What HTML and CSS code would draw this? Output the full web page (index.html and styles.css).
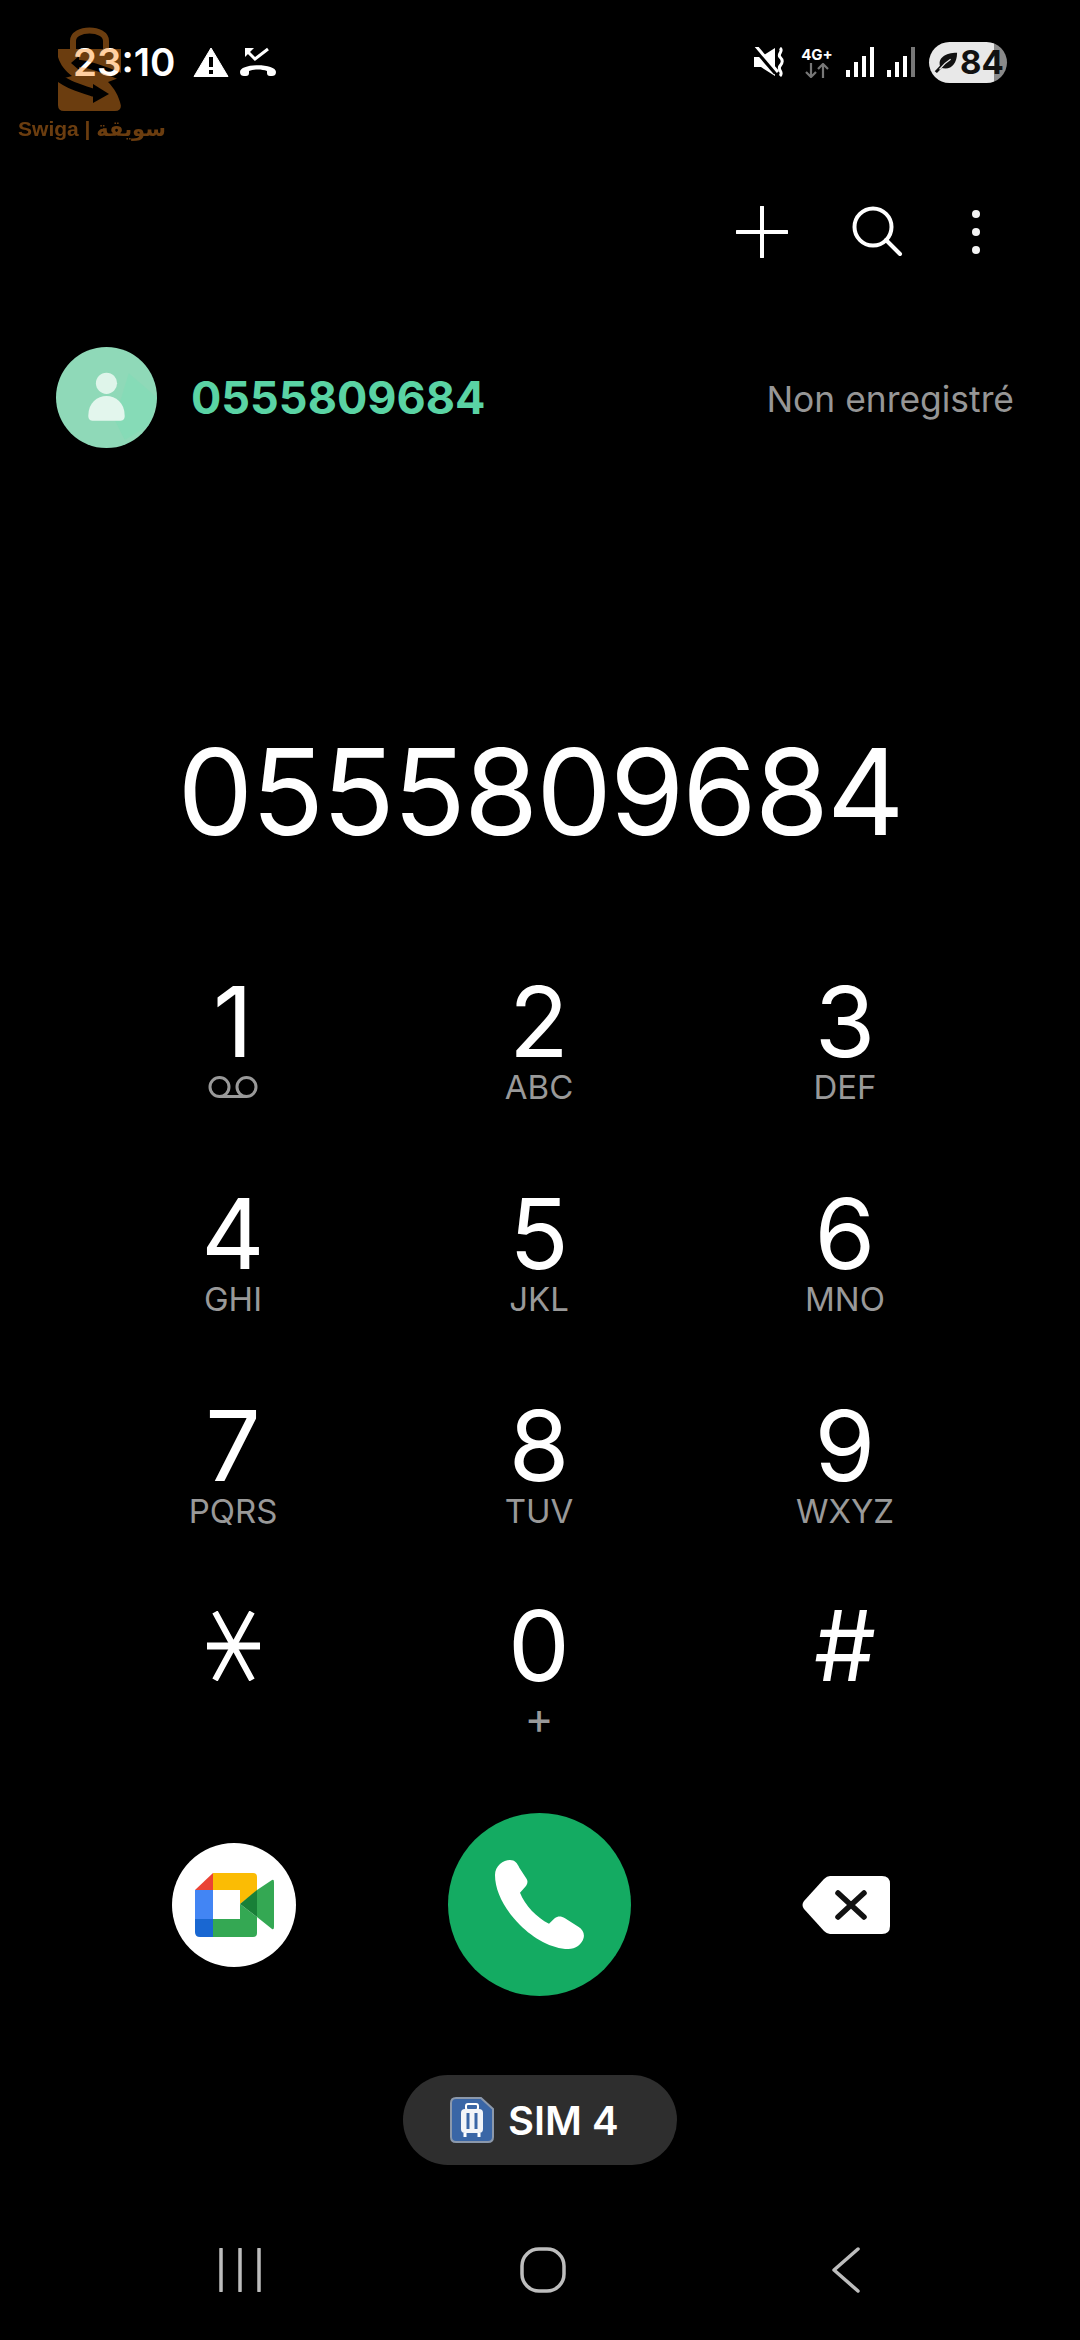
FILE: index.html
```html
<!DOCTYPE html>
<html lang="fr">
<head>
<meta charset="utf-8">
<title>Téléphone</title>
<link rel="stylesheet" href="styles.css">
</head>
<body>
<main class="phone">
  <header class="status">
    <div class="status-left">
      <span class="time">23:10</span>
      <svg class="st-warn" viewBox="0 0 36 30"><path d="M18 1 35 29.500H1Z" fill="#fff" stroke="#fff" stroke-linejoin="round"/><rect x="16" y="10" width="4" height="10" fill="#000"/><rect x="16" y="23" width="4" height="4" fill="#000"/></svg>
      <svg class="st-missed" viewBox="0 0 36 30"><path d="M6 3 15 12 28 2" fill="none" stroke="#fff" stroke-width="3"/><path d="M5 1h9L5 10Z" fill="#fff"/><path d="M0 25c0-9 36-9 36 0 0 3-2 4-4 4h-2c-2 0-3-1-3-3v-2c-5-2-13-2-18 0v2c0 2-1 3-3 3H4c-2 0-4-1-4-4Z" fill="#fff"/></svg>
    </div>
    <div class="status-right">
      <svg class="st-mute" viewBox="0 0 30 30"><path d="M0 10h7L21 1v28L7 20H0Z" fill="#fff"/><path d="M-1 -1 22 26" stroke="#000" stroke-width="5"/><path d="M1 -2 24 25" stroke="#fff" stroke-width="3"/><path d="M26 1c4 3-3 6 0 9s3 5 0 9 4 6 0 10" fill="none" stroke="#fff" stroke-width="3"/></svg>
      <div class="net">
        <span class="net-label">4G+</span>
        <svg class="net-arrows" viewBox="0 0 24 15"><path d="M6 0v14M1 9l5 5 5-5" fill="none" stroke="#777" stroke-width="2.200"/><path d="M18 15V1M13 6l5-5 5 5" fill="none" stroke="#777" stroke-width="2.200"/></svg>
      </div>
      <svg class="st-signal" viewBox="0 0 28 30"><rect x="0" y="23" width="4" height="7" fill="#fff"/><rect x="8" y="15" width="4" height="15" fill="#fff"/><rect x="16" y="9" width="4" height="21" fill="#fff"/><rect x="24" y="0" width="4" height="30" fill="#fff"/></svg>
      <svg class="st-signal" viewBox="0 0 28 30"><rect x="0" y="23" width="4" height="7" fill="#fff"/><rect x="8" y="15" width="4" height="15" fill="#fff"/><rect x="16" y="9" width="4" height="21" fill="#fff"/><rect x="24" y="0" width="4" height="30" fill="#777"/></svg>
      <div class="battery">
        <svg class="leaf" viewBox="0 0 26 26"><path d="M7 19C3 9 12 3 25 3 25 16 17 23 7 19Z" fill="#111"/><path d="M2 24C6 19 10 16 15 13" fill="none" stroke="#111" stroke-width="3"/><path d="M6 21C10 16 13 13 18 10" fill="none" stroke="#e8e8e8" stroke-width="1.500"/></svg>
        <span class="battery-level">84</span>
      </div>
    </div>
  </header>

  <nav class="toolbar">
    <svg class="tool tool-plus" viewBox="0 0 52 52"><path d="M26 1V51M1 26H51" stroke="#fff" stroke-width="4" stroke-linecap="round"/></svg>
    <svg class="tool tool-search" viewBox="0 0 52 52"><circle cx="21" cy="21" r="18.500" fill="none" stroke="#fff" stroke-width="4"/><path d="M34 34 48 48" stroke="#fff" stroke-width="4" stroke-linecap="round"/></svg>
    <svg class="tool tool-more" viewBox="0 0 10 46"><circle cx="5" cy="5" r="4" fill="#f4f4f4"/><circle cx="5" cy="23" r="4" fill="#f4f4f4"/><circle cx="5" cy="41" r="4" fill="#f4f4f4"/></svg>
  </nav>

  <section class="contact">
    <div class="contact-main">
      <div class="avatar">
        <svg viewBox="0 0 100 100"><path d="M72 26 100 50 92 78 68 92 58 72Z" fill="#7fdcb6" opacity=".55"/><circle cx="50" cy="36" r="10.500" fill="#dff5ea"/><path d="M32 68c0-26 36-26 36 0 0 4-2 5-5 5H37c-3 0-5-1-5-5Z" fill="#e3f6ed"/></svg>
      </div>
      <span class="contact-number">0555809684</span>
    </div>
    <span class="contact-state">Non enregistré</span>
  </section>

  <div class="dialed">0555809684</div>

  <section class="keypad">
    <div class="key">
      <span class="digit">1</span>
      <svg class="voicemail" viewBox="0 0 50 22"><circle cx="11.500" cy="11" r="9.500" fill="none" stroke="#999" stroke-width="3"/><circle cx="38.500" cy="11" r="9.500" fill="none" stroke="#999" stroke-width="3"/><path d="M11 20.500H39" stroke="#999" stroke-width="3"/></svg>
    </div>
    <div class="key"><span class="digit">2</span><span class="letters">ABC</span></div>
    <div class="key"><span class="digit">3</span><span class="letters">DEF</span></div>
    <div class="key"><span class="digit">4</span><span class="letters">GHI</span></div>
    <div class="key"><span class="digit">5</span><span class="letters">JKL</span></div>
    <div class="key"><span class="digit">6</span><span class="letters">MNO</span></div>
    <div class="key"><span class="digit">7</span><span class="letters">PQRS</span></div>
    <div class="key"><span class="digit">8</span><span class="letters">TUV</span></div>
    <div class="key"><span class="digit">9</span><span class="letters">WXYZ</span></div>
    <div class="key">
      <span class="digit digit-icon"><svg class="star" viewBox="0 0 53 70"><path d="M8 1 45 69M45 1 8 69" stroke="#fff" stroke-width="6"/><path d="M0 35H53" stroke="#fff" stroke-width="7"/></svg></span>
    </div>
    <div class="key"><span class="digit">0</span><span class="letters letters-plus">+</span></div>
    <div class="key"><span class="digit">#</span></div>
  </section>

  <section class="actions">
    <div class="meet">
      <svg viewBox="0 0 124 124">
        <path d="M23 47 41 30V47Z" fill="#ea4335"/>
        <path d="M41 30H81Q85 30 85 34V48L68 61V47H41Z" fill="#fbbc04"/>
        <path d="M23 47H41V76H23Z" fill="#4285f4"/>
        <path d="M23 76H41V94H28Q23 94 23 89Z" fill="#1967d2"/>
        <path d="M41 76H68V61L85 74V90Q85 94 81 94H41Z" fill="#34a853"/>
        <path d="M68 61 85 47V74Z" fill="#188038"/>
        <path d="M85 47 100 37Q102 36 102 39V84Q102 87 100 86L85 74Z" fill="#34a853"/>
      </svg>
    </div>
    <div class="call">
      <svg viewBox="1020 190 300 300"><path d="M1035 250C1035 222 1060 205 1080 205 1095 205 1102 215 1108 228L1130 262C1136 272 1130 282 1122 290L1110 303C1125 340 1160 378 1197 396L1214 380C1224 372 1234 373 1245 380L1285 405C1298 413 1304 425 1301 438 1296 458 1276 472 1255 472 1205 472 1150 440 1110 400 1065 355 1035 300 1035 250Z" fill="#fff"/></svg>
    </div>
    <svg class="backspace" viewBox="0 0 88 58"><path d="M28 0H80Q88 0 88 8V50Q88 58 80 58H28Q25 58 22 55L2 33Q-1 29 2 25L22 3Q25 0 28 0Z" fill="#fff"/><path d="M36 17 62 41M62 17 36 41" stroke="#111" stroke-width="5.500" stroke-linecap="round"/></svg>
  </section>

  <div class="sim-row">
    <div class="sim">
      <svg class="sim-icon" viewBox="0 0 44 46"><path d="M6 1H31L43 12V40Q43 45 38 45H6Q1 45 1 40V6Q1 1 6 1Z" fill="#3a66a6" stroke="#8b98ab" stroke-width="2"/><rect x="16" y="7" width="12" height="6" rx="2" fill="none" stroke="#fff" stroke-width="2"/><rect x="11" y="12" width="22" height="24" rx="4" fill="#f2f4f8"/><path d="M18 16V32M26 16V32" stroke="#3a66a6" stroke-width="3"/><path d="M15 36v4M29 36v4" stroke="#fff" stroke-width="3"/></svg>
      <span class="sim-label">SIM 4</span>
    </div>
  </div>

  <footer class="navbar">
    <svg class="nav-recent" viewBox="0 0 42 44"><path d="M2 1V43M21 1V43M40 1V43" stroke="#bdbdbd" stroke-width="3.500" stroke-linecap="round"/></svg>
    <svg class="nav-home" viewBox="0 0 46 46"><rect x="2" y="2" width="42" height="42" rx="17" fill="none" stroke="#bdbdbd" stroke-width="3.500"/></svg>
    <svg class="nav-back" viewBox="0 0 30 46"><path d="M27 2 3 23 27 44" fill="none" stroke="#bdbdbd" stroke-width="3.500" stroke-linecap="round" stroke-linejoin="round"/></svg>
  </footer>

  <aside class="watermark">
    <svg class="wm-bag" viewBox="0 0 64 84">
      <mask id="bagcut" maskUnits="userSpaceOnUse" x="0" y="0" width="64" height="84">
        <path d="M0 21H63V77Q63 83 57 83H6Q0 83 0 77Z" fill="#fff"/>
        <path d="M-1 25C1 35 6 42 14 48L-1 52Z" fill="#000"/>
        <path d="M-4 46C10 58 22 60 36 65" fill="none" stroke="#000" stroke-width="8"/>
        <path d="M35 56 51 66 35 75Z" fill="#000"/>
        <path d="M18 35C32 36 48 42 66 50" fill="none" stroke="#000" stroke-width="7"/>
        <path d="M13 35 21 28V42Z" fill="#000"/>
        <path d="M50 54C56 60 61 68 63 78H66V48Z" fill="#000"/>
      </mask>
      <path d="M15 21V13C15 -1 48 -1 48 13V21" fill="none" stroke="#ff9124" stroke-width="6"/>
      <rect x="0" y="0" width="64" height="84" fill="#ff9124" mask="url(#bagcut)"/>
    </svg>
    <span class="wm-text">Swiga | سويقة</span>
  </aside>
</main>
</body>
</html>
```
FILE: styles.css
```css
* { box-sizing: border-box; }
html, body { margin: 0; padding: 0; background: #000; }
svg { display: block; flex: none; }

.phone {
  position: relative;
  width: 1080px;
  height: 2340px;
  overflow: hidden;
  display: flex;
  flex-direction: column;
  background: #000;
  color: #fff;
  font-family: Inter, "Noto Sans", sans-serif;
}

/* Status bar */
.status {
  height: 206px;
  padding: 41px 73px 0 73px;
  display: flex;
  justify-content: space-between;
  align-items: flex-start;
}
.status-left { display: flex; align-items: center; height: 42px; }
.time { font-size: 38.500px; font-weight: 600; line-height: 42px; width: 120px; white-space: nowrap; }
.st-warn { width: 36px; height: 30px; }
.st-missed { width: 36px; height: 30px; margin-left: 11px; }
.status-right { display: flex; align-items: center; height: 42px; }
.st-mute { width: 30px; height: 30px; }
.net { width: 34px; margin-left: 16px; display: flex; flex-direction: column; align-items: center; }
.net-label { font-size: 15px; font-weight: 700; line-height: 16px; white-space: nowrap; }
.net-arrows { width: 24px; height: 15px; }
.st-signal { width: 28px; height: 30px; margin-left: 12px; }
.st-signal + .st-signal { margin-left: 13px; }
.battery {
  width: 78px;
  height: 41px;
  margin-left: 14px;
  border-radius: 21px;
  background: linear-gradient(to right, #e8e8e8 83%, #8a8a8a 83%);
  display: flex;
  align-items: center;
  padding-left: 5px;
  color: #111;
}
.leaf { width: 24px; height: 24px; }
.battery-level { font-size: 33px; font-weight: 700; margin-left: 2px; line-height: 41px; }

/* Toolbar */
.toolbar {
  height: 52px;
  padding-right: 99px;
  display: flex;
  justify-content: flex-end;
  align-items: center;
}
.tool-plus { width: 52px; height: 52px; }
.tool-search { width: 52px; height: 52px; margin-left: 64px; }
.tool-more { width: 10px; height: 46px; margin-left: 67px; }

/* Contact row */
.contact {
  margin-top: 89px;
  height: 100px;
  padding: 0 66px 0 56px;
  display: flex;
  justify-content: space-between;
  align-items: center;
}
.contact-main { display: flex; align-items: center; }
.avatar { width: 101px; height: 101px; border-radius: 50%; overflow: hidden; background: #8fd9b8; }
.contact-number { margin-left: 34px; padding-top: 1px; font-size: 45px; font-weight: 700; color: #5ad3a4; }
.contact-state { padding-top: 5px; font-size: 35.400px; color: #969696; }

/* Dialed number */
.dialed {
  margin-top: 270px;
  height: 150px;
  line-height: 150px;
  text-align: center;
  font-size: 120px;
  font-weight: 400;
  letter-spacing: -2px;
}

/* Keypad */
.keypad {
  margin-top: 108px;
  padding-left: 80px;
  display: grid;
  grid-template-columns: repeat(3, 306px);
  grid-template-rows: 212px 212px 200px 200px;
}
.key { display: flex; flex-direction: column; align-items: center; }
.digit { font-size: 98px; font-weight: 400; line-height: 94px; height: 94px; }
.digit-icon { display: flex; align-items: center; }
.star { width: 53px; height: 70px; }
.letters { font-size: 33px; line-height: 36px; color: #999; }
.letters-plus { font-size: 44px; margin-top: 7px; }
.voicemail { width: 50px; height: 22px; margin-top: 7px; }

/* Actions */
.actions {
  height: 183px;
  margin-top: 14px;
  padding-left: 172px;
  display: flex;
  align-items: center;
}
.meet { width: 124px; height: 124px; border-radius: 50%; background: #fff; }
.call { width: 183px; height: 183px; margin-left: 152px; border-radius: 50%; background: #14ab62; display: flex; align-items: center; justify-content: center; }
.call svg { width: 100px; height: 100px; }
.backspace { width: 88px; height: 58px; margin-left: 171px; }

/* SIM */
.sim-row { margin-top: 79px; display: flex; justify-content: center; }
.sim {
  width: 274px;
  height: 90px;
  border-radius: 45px;
  background: #2e2e2e;
  display: flex;
  align-items: center;
  padding-left: 47px;
}
.sim-icon { width: 44px; height: 46px; }
.sim-label { margin-left: 14px; font-size: 40px; font-weight: 600; }

/* Navigation */
.navbar {
  margin-top: 82px;
  height: 46px;
  padding: 0 219px 0 219px;
  display: flex;
  justify-content: space-between;
  align-items: center;
}
.nav-recent { width: 42px; height: 44px; }
.nav-home { width: 46px; height: 46px; margin-left: -6px; }
.nav-back { width: 30px; height: 46px; }

/* Watermark over the status bar */
.watermark {
  position: absolute;
  left: 17px;
  top: 28px;
  width: 150px;
  display: flex;
  flex-direction: column;
  align-items: center;
  opacity: .42;
}
.wm-bag { width: 64px; height: 84px; overflow: visible; margin-left: -4px; }
.wm-text {
  margin-top: 4px;
  font-family: "Liberation Sans", "DejaVu Sans", sans-serif;
  font-size: 21px;
  font-weight: 700;
  line-height: 26px;
  color: #ff9124;
  white-space: nowrap;
}
```
